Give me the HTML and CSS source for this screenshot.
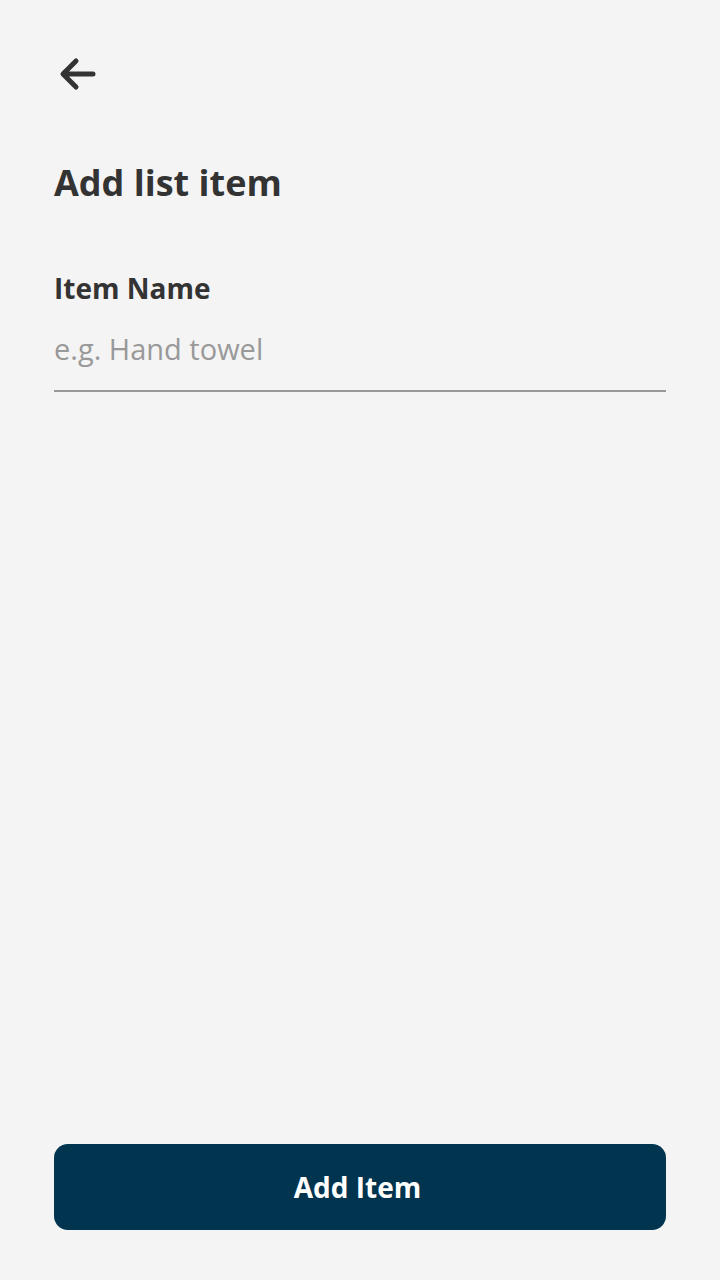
FILE: index.html
```html
<!DOCTYPE html>
<html>
<head>
<meta charset="utf-8">
<link rel="stylesheet" href="styles.css">
</head>
<body>
<div class="screen">
  <div class="top">
    <button class="back" aria-label="Back">
      <svg width="40" height="40" viewBox="0 0 40 40"><path d="M37 20H8M20 7L7 20l13 13" fill="none" stroke="#333" stroke-width="5" stroke-linecap="round" stroke-linejoin="round"/></svg>
    </button>
    <h1 class="title">Add list item</h1>
    <label class="label" for="name">Item Name</label>
    <input id="name" class="field" type="text" placeholder="e.g. Hand towel">
  </div>
  <button class="submit">Add Item</button>
</div>
</body>
</html>
```
FILE: styles.css
```css
html, body {
  margin: 0;
  padding: 0;
  background: #f4f4f4;
}
.screen {
  box-sizing: border-box;
  height: 1280px;
  padding: 54px 54px 50px;
  display: flex;
  flex-direction: column;
  justify-content: space-between;
  font-family: "Open Sans", "Liberation Sans", sans-serif;
  color: #333;
}
.top {
  display: flex;
  flex-direction: column;
}
.back {
  width: 40px;
  height: 40px;
  padding: 0;
  margin: 0 0 0 2px;
  border: 0;
  background: none;
  display: block;
}
.back svg { display: block; }
.title {
  margin: 64px 0 0;
  font-size: 36px;
  font-weight: 700;
  line-height: 50px;
}
.label {
  margin-top: 61px;
  font-size: 28px;
  font-weight: 700;
  line-height: 38px;
}
.field {
  margin-top: 22px;
  border: 0;
  border-bottom: 2px solid #999;
  background: transparent;
  padding: 0 0 21px;
  font-family: inherit;
  font-size: 29px;
  line-height: 40px;
  color: #333;
  outline: none;
}
.field::placeholder { color: #999; }
.submit {
  height: 86px;
  border: 0;
  border-radius: 14px;
  background: #00344f;
  color: #fff;
  font-family: inherit;
  font-size: 28px;
  font-weight: 700;
  padding: 0 5px 0 0;
}
```
